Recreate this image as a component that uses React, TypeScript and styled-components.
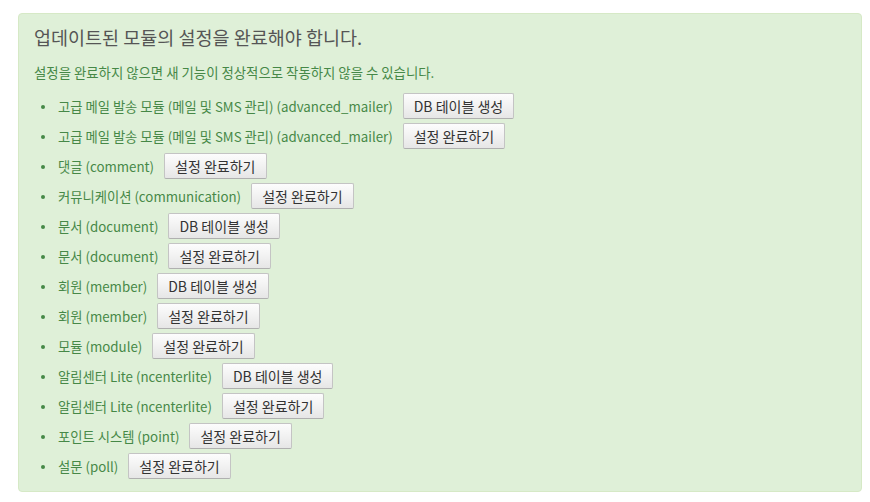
import React from 'react'
import styled, { createGlobalStyle } from 'styled-components'

const GlobalStyle = createGlobalStyle`
    body {
        margin: 0;
        background: #fff;
        font-family: "Noto Sans CJK KR", "Noto Sans", sans-serif;
    }
`

const Page = styled.div`
    padding: 13px 8px 10px 18px;
`

const Alert = styled.div`
    background-color: #dff0d8;
    border: 1px solid #d6e9c6;
    border-radius: 4px;
    padding: 10px 15px 10px 15px;
    color: #468847;
`

const Title = styled.h2`
    margin: 0;
    font-size: 18.5px;
    font-weight: normal;
    color: #555;
    line-height: 26px;
`

const Lead = styled.p`
    margin: 13px 0 10px;
    font-size: 13.4px;
    line-height: 18px;
`

const List = styled.ul`
    margin: 0;
    padding: 0 0 0 24px;
`

const Item = styled.li`
    height: 30px;
    display: flex;
    align-items: center;
    font-size: 13.3px;
    position: relative;
    list-style: none;

    &::before {
        content: '';
        position: absolute;
        left: -17px;
        top: 14px;
        width: 4px;
        height: 4px;
        border-radius: 50%;
        background: #468847;
    }
`

const Button = styled.button`
    margin-left: 10px;
    height: 26px;
    padding: 0 10px;
    font-family: "Noto Sans CJK KR", "Noto Sans", sans-serif;
    font-size: 14px;
    color: #333;
    background: linear-gradient(#fdfdfd, #e6e6e6);
    border: 1px solid #c4c4c4;
    border-bottom-color: #b0b0b0;
    border-radius: 2px;
    cursor: pointer;
`

const items: [string, string][] = [
    ['고급 메일 발송 모듈 (메일 및 SMS 관리) (advanced_mailer)', 'DB 테이블 생성'],
    ['고급 메일 발송 모듈 (메일 및 SMS 관리) (advanced_mailer)', '설정 완료하기'],
    ['댓글 (comment)', '설정 완료하기'],
    ['커뮤니케이션 (communication)', '설정 완료하기'],
    ['문서 (document)', 'DB 테이블 생성'],
    ['문서 (document)', '설정 완료하기'],
    ['회원 (member)', 'DB 테이블 생성'],
    ['회원 (member)', '설정 완료하기'],
    ['모듈 (module)', '설정 완료하기'],
    ['알림센터 Lite (ncenterlite)', 'DB 테이블 생성'],
    ['알림센터 Lite (ncenterlite)', '설정 완료하기'],
    ['포인트 시스템 (point)', '설정 완료하기'],
    ['설문 (poll)', '설정 완료하기'],
]

const App = () => {
    return (
        <Page>
            <GlobalStyle />
            <Alert>
                <Title>업데이트된 모듈의 설정을 완료해야 합니다.</Title>
                <Lead>설정을 완료하지 않으면 새 기능이 정상적으로 작동하지 않을 수 있습니다.</Lead>
                <List>
                    {items.map(([name, action], i) => (
                        <Item key={i}>
                            {name}
                            <Button>{action}</Button>
                        </Item>
                    ))}
                </List>
            </Alert>
        </Page>
    )
}

export default App
